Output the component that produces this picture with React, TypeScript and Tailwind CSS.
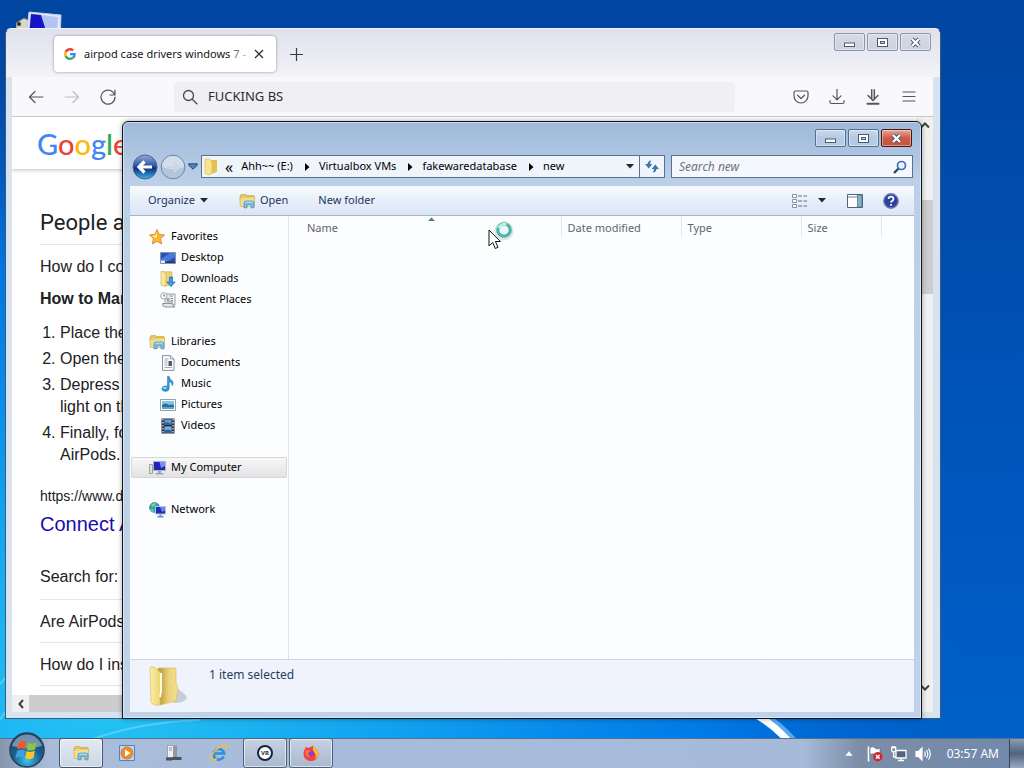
import type { ReactNode } from "react";

const uiFont = "font-['Noto_Sans','Open_Sans',sans-serif]";
const webFont = "font-['Liberation_Sans',Arial,sans-serif]";

/* ---------- icons ---------- */

function LibraryIcon({ className }: { className: string }) {
  return (
    <svg viewBox="0 0 17 16" className={className}>
      <path d="M1 3.5 2 1.5h5l1 1h7v3H1z" fill="#e8c75c" stroke="#c9a33c" strokeWidth=".6" />
      <path d="M2 3.5h13v9H2z" fill="#f7efb4" stroke="#d0b352" strokeWidth=".6" />
      <path d="M.8 5h4.5l1-1h9.4l-.6 9.5H1.4z" fill="#f3e08f" stroke="#cda944" strokeWidth=".6" />
      <path d="M5 14.8V10q0-2 2-2h6q2 0 2 2v4.8h-3v-3.4H8v3.4z" fill="#7cc0e8" stroke="#3d86bd" strokeWidth=".7" />
      <path d="M6 9.6q.2-.8 1.2-.8h5.6q1 0 1.2.8z" fill="#d6f0fc" />
    </svg>
  );
}

function FolderIcon({ className }: { className: string }) {
  return (
    <svg viewBox="0 0 40 42" className={className}>
      <defs>
        <linearGradient id="folderFront" x1="0" x2="1">
          <stop offset="0" stopColor="#fbf0a8" />
          <stop offset="1" stopColor="#ecd274" />
        </linearGradient>
        <linearGradient id="folderBack" x1="0" x2="1">
          <stop offset="0" stopColor="#b8942f" />
          <stop offset=".55" stopColor="#ecd47e" />
          <stop offset="1" stopColor="#f4e08c" />
        </linearGradient>
      </defs>
      <path d="M24 38 29 24q9 6 9 9-2 5-14 5" fill="#8e93a8" opacity=".4" />
      <path d="M9 3h18v15l2 5-2 13-16 4z" fill="url(#folderBack)" stroke="#d9bb58" strokeWidth=".6" />
      <path d="M1 2h4l7 6v19l-1 6v7q-7 1-9-3z" fill="url(#folderFront)" stroke="#d6b751" strokeWidth=".6" />
      <path d="M12 8v19l-1 5" fill="none" stroke="#fffdf0" strokeWidth="1.800" />
    </svg>
  );
}

function StarIcon() {
  return (
    <svg viewBox="0 0 16 16" className="size-4">
      <path d="m8 .5 2.200 4.900 5.300.6-4 3.600 1.200 5.400L8 12.300l-4.700 2.700 1.200-5.400L.5 6l5.300-.6z" fill="#fbb829" stroke="#d9772a" strokeWidth=".8" />
      <path d="M8 2.500 6.500 6.200 3 6.700l3.300 2.600L8 8z" fill="#ffe88a" />
    </svg>
  );
}

function DesktopIcon() {
  return (
    <svg viewBox="0 0 16 16" className="size-4">
      <path d="M.5 2.500h15v11H.5z" fill="#2b4fc0" stroke="#8794a8" />
      <path d="M1 9 10 3h5v4L6 12H1z" fill="#5a8be6" opacity=".7" />
      <path d="M1 11.500h14V13H1z" fill="#273a66" />
      <path d="M1 10.500h4V13H1z" fill="#dfe8f6" />
    </svg>
  );
}

function DownloadsIcon() {
  return (
    <svg viewBox="0 0 16 16" className="size-4">
      <path d="M4 .8h8v13l-7 1z" fill="#ebd27a" stroke="#c9a94a" strokeWidth=".6" />
      <path d="M1 .5h2.500L6 3v10l-1 2.500L1 14z" fill="#f7e79a" stroke="#c9a94a" strokeWidth=".6" />
      <path d="M9.500 6h3v5h2.700L11 15.600 6.800 11h2.700z" fill="#3f9be6" stroke="#1f62a8" strokeWidth=".7" />
    </svg>
  );
}

function RecentIcon() {
  return (
    <svg viewBox="0 0 16 16" className="size-4">
      <path d="M5 2h10v11H5z" fill="#f1f2f5" stroke="#83878f" strokeWidth=".8" />
      <path d="M2.500 11.500h10q0 3 2.500 3.500H5q-2.500 0-2.500-3.500z" fill="#e1e4e8" stroke="#7b8088" strokeWidth=".8" />
      <path d="M7 6.500h2v2H7zM9 4h4M10.500 6.500H13M10.500 8.500H13M7 10h6" fill="none" stroke="#6f757e" strokeWidth=".8" />
      <circle cx="3.800" cy="3.800" r="3.200" fill="#fff" stroke="#8a8f98" strokeWidth=".8" />
      <path d="M3.800 2v2h1.500" fill="none" stroke="#444" strokeWidth=".7" />
    </svg>
  );
}

function DocumentIcon() {
  return (
    <svg viewBox="0 0 16 16" className="size-4">
      <path d="M2.500.6h8L14 4v11.400H2.500z" fill="#fdfdfe" stroke="#7f858e" strokeWidth=".9" />
      <path d="M10.500.6V4H14" fill="#dde2ea" stroke="#7f858e" strokeWidth=".7" />
      <path d="M4.500 4h4M4.500 6h3M4.500 8h3M4.500 10h3M4.500 12.500H12" stroke="#8b93a3" strokeWidth=".8" />
      <path d="M8.500 6H12v5H8.500z" fill="#4f5a6e" />
    </svg>
  );
}

function MusicIcon() {
  return (
    <svg viewBox="0 0 16 16" className="size-4">
      <path d="M7.500.5h1.700q.3 2.500 2.700 4 2.400 1.900.3 5.300.3-3.300-3-4.300v6.700q-.1 3-3.700 3.200-3.800-.1-3.600-2.800.5-2.600 3.600-2.700 1.200 0 2 .4z" fill="#2e9bd6" stroke="#1c6fae" strokeWidth=".5" />
      <ellipse cx="4.800" cy="12" rx="1.800" ry="1.100" fill="#9bdcf5" />
    </svg>
  );
}

function PictureIcon() {
  return (
    <svg viewBox="0 0 16 16" className="size-4">
      <path d="M.5 2.500h15v11H.5z" fill="#fbfcfd" stroke="#8c95a0" strokeWidth=".9" />
      <path d="M2 4h12v4H2z" fill="#7fc6ee" />
      <path d="M2 8q4-3 7 0 3-1 5 0v4H2z" fill="#2b6f8f" />
      <path d="M2 10h12v2H2z" fill="#52a9cf" />
    </svg>
  );
}

function VideoIcon() {
  return (
    <svg viewBox="0 0 16 16" className="size-4">
      <path d="M1.500.5h13v15h-13z" fill="#26303f" />
      <path d="M4.500 1.500h7V7h-7z" fill="#5ba1d8" />
      <path d="M4.500 8.500h7v6h-7z" fill="#6fb7ea" />
      <path d="M4.500 5q3-2 7 1v1h-7zM4.500 12.500q4-2 7 .5v1.500h-7z" fill="#37609b" />
      <path d="M3 1v14M13 1v14" stroke="#e6ebf2" strokeWidth="1.200" strokeDasharray="1.500 1.500" />
    </svg>
  );
}

function ComputerIcon() {
  return (
    <svg viewBox="0 0 17 16" className="h-4 w-[17px]">
      <path d="M.5 4.500h3v9h-3z" fill="#dfe2d2" stroke="#8d927f" strokeWidth=".8" />
      <path d="M4.500 1.500h12v9h-12z" fill="#2024b4" stroke="#a8b3cc" />
      <path d="M10.500 2H16v4l-4 2z" fill="#7b90f0" />
      <path d="M9 11h3v2H9zM6.500 13h8v1.500h-8z" fill="#9aa3b5" />
    </svg>
  );
}

function NetworkIcon() {
  return (
    <svg viewBox="0 0 17 16" className="h-4 w-[17px]">
      <circle cx="5.500" cy="5.500" r="5" fill="#2c9ec7" stroke="#1c6d98" strokeWidth=".5" />
      <path d="M2 2.500q3-2 5-1.500L6 4 3 5zM1 7h3l1 3q-3-.5-4-3" fill="#7ed37e" />
      <path d="M6.500 4.500h10V12h-10z" fill="#1d2cc0" stroke="#b9c4dc" />
      <path d="M11 5h5v3.500L13 10z" fill="#6f83ee" />
      <path d="M10.500 12.500h2V14h2v1.500h-6V14h2z" fill="#7e88a4" />
    </svg>
  );
}

function GoogleG() {
  return (
    <svg viewBox="0 0 48 48" className="size-3 shrink-0">
      <path fill="#ea4335" d="M24 9.500c3.500 0 6.700 1.200 9.200 3.600l6.900-6.900C35.900 2.400 30.500 0 24 0 14.600 0 6.500 5.400 2.600 13.200l8 6.200C12.400 13.700 17.700 9.500 24 9.500z" />
      <path fill="#4285f4" d="M47 24.600c0-1.600-.2-3.100-.4-4.600H24v9h12.900c-.6 3-2.300 5.500-4.800 7.200l7.700 6c4.500-4.200 7.200-10.400 7.200-17.600z" />
      <path fill="#fbbc05" d="M10.500 28.600c-.5-1.500-.8-3-.8-4.600s.3-3.100.8-4.600l-8-6.200C.9 16.500 0 20.100 0 24s.9 7.500 2.600 10.800z" />
      <path fill="#34a853" d="M24 48c6.500 0 11.900-2.100 15.900-5.800l-7.700-6c-2.200 1.500-4.900 2.300-8.200 2.300-6.300 0-11.600-4.200-13.500-9.900l-8 6.200C6.500 42.600 14.600 48 24 48z" />
    </svg>
  );
}

function Triangle() {
  return (
    <svg viewBox="0 0 8 5" className="h-[5px] w-2">
      <path d="M0 0h8L4 4.500z" fill="#1d2939" />
    </svg>
  );
}

/* ---------- window chrome ---------- */

function CaptionButton({ kind, active }: { kind: "min" | "max" | "close"; active?: boolean }) {
  const look =
    kind === "close" && active
      ? "border-[#4a1510] bg-linear-to-b from-[#e3a89c] via-[#cf5a45] to-[#c8523c]"
      : active
        ? "border-[#54708f] bg-linear-to-b from-[#c9daee] via-[#b3c9e4] to-[#b5cce8]"
        : "border-[#8a96a8] bg-linear-to-b from-[#d5dbe6] to-[#cad3e0]";
  return (
    <button aria-label={kind} className={`flex h-[18px] w-[31px] items-center justify-center rounded-[2px] border ring-1 ring-white/40 ring-inset ${look}`}>
      <svg viewBox="0 0 13 11" className="h-[11px] w-[13px]">
        {kind === "min" && <rect x="1.500" y="6" width="10" height="3.500" fill="#fff" stroke="#4c5a6e" />}
        {kind === "max" && (
          <>
            <rect x="1.500" y="1.500" width="10" height="8" fill="#fff" stroke="#4c5a6e" />
            <rect x="4.500" y="4.500" width="4" height="2" fill="#c3d4e8" stroke="#4c5a6e" />
          </>
        )}
        {kind === "close" && (
          <>
            <path d="m3 2 7 7M10 2 3 9" stroke="#4c5a6e" strokeWidth="4" />
            <path d="m3 2 7 7M10 2 3 9" stroke="#fff" strokeWidth="2.200" />
          </>
        )}
      </svg>
    </button>
  );
}

function CaptionButtons({ active }: { active?: boolean }) {
  return (
    <div className="flex gap-[2px]">
      <CaptionButton kind="min" active={active} />
      <CaptionButton kind="max" active={active} />
      <CaptionButton kind="close" active={active} />
    </div>
  );
}

/* ---------- browser ---------- */

function ToolButton({ label, children }: { label: string; children: ReactNode }) {
  return (
    <button aria-label={label} className="flex h-8 w-9 items-center justify-center">
      <svg viewBox="0 0 16 16" className="size-4" fill="none" stroke="#55555c" strokeWidth="1.200" strokeLinecap="round" strokeLinejoin="round">
        {children}
      </svg>
    </button>
  );
}

function BrowserWindow() {
  return (
    <section className={`absolute top-[28px] right-[83px] bottom-[19px] left-[5px] flex flex-col rounded-t-md border border-[#3d5878] border-t-[#eef2fa] bg-[#d8e3f1] pr-[7px] pb-[6px] pl-[6px] ${uiFont}`}>
      <header className="-mr-[7px] -ml-[6px] flex h-12 items-start rounded-t-md bg-linear-to-b from-[#dfe1ec] to-[#f3f3f8] pr-[9px] pl-[48px]">
        <div className="mt-[7px] flex h-9 w-[222px] items-center rounded bg-white pr-3 pl-[10px] shadow-[0_0_3px_rgba(0,0,0,0.4)]">
          <GoogleG />
          <span className="ml-2 flex-1 text-[11px] whitespace-nowrap text-[#15141a]">
            airpod case drivers windows <span className="text-[#77777d]">7</span> <span className="text-[#b0b0b5]">-</span>
          </span>
          <button aria-label="Close tab">
            <svg viewBox="0 0 10 10" className="size-[10px]" stroke="#2b2a33" strokeWidth="1.200">
              <path d="m1 1 8 8M9 1 1 9" />
            </svg>
          </button>
        </div>
        <button aria-label="New tab" className="mt-[19px] ml-[14px]">
          <svg viewBox="0 0 13 13" className="size-[13px]" stroke="#3b3b42" strokeWidth="1.200">
            <path d="M6.500 0v13M0 6.500h13" />
          </svg>
        </button>
        <div className="mt-1 ml-auto">
          <CaptionButtons />
        </div>
      </header>

      <nav className="flex h-10 items-center border-b border-[#c9c9ce] bg-[#f9f9fb] px-[6px]">
        <ToolButton label="Back">
          <path d="M15 8H1.500M7 2.500 1.500 8 7 13.500" />
        </ToolButton>
        <ToolButton label="Forward">
          <path d="M1 8h13.500M9 2.500 14.500 8 9 13.500" stroke="#bdbdc2" />
        </ToolButton>
        <ToolButton label="Reload">
          <path d="M14.500 5.500A7 7 0 1 0 15 8M15 1v5h-5" />
        </ToolButton>
        <label className="ml-12 flex h-[30px] flex-1 items-center rounded bg-[#f0eff3] pl-2">
          <svg viewBox="0 0 16 16" className="size-4" fill="none" stroke="#4a4a52" strokeWidth="1.300">
            <circle cx="6.500" cy="6.500" r="5" />
            <path d="m10.300 10.300 5 5" />
          </svg>
          <input aria-label="Address" defaultValue="FUCKING BS" className="ml-[10px] min-w-0 flex-1 bg-transparent text-[13px] text-[#2b2a33] outline-none" />
        </label>
        <div className="ml-12 flex">
          <ToolButton label="Pocket">
            <path d="M2.500 2h11q1.500 0 1.500 1.500V7A7 7 0 0 1 1 7V3.500Q1 2 2.500 2zM4.500 6.200 8 9.500l3.500-3.300" />
          </ToolButton>
          <ToolButton label="Downloads">
            <path d="M8 0v10.500M4 6.800l4 4 4-4M1 11.500V13q0 1.500 1.500 1.500h11q1.500 0 1.500-1.500v-1.500" />
          </ToolButton>
          <ToolButton label="Download helper">
            <path d="M6.700.8v9M9.300.8v9M3 6.500l5 5 5-5" strokeWidth="1.500" />
            <path d="M2.500 14.800h11" strokeWidth="2" />
          </ToolButton>
          <ToolButton label="Menu">
            <path d="M2 3h12M2 7.500h12M2 12h12" />
          </ToolButton>
        </div>
      </nav>

      <div className="flex min-h-0 flex-1">
        <div className="flex min-w-0 flex-1 flex-col bg-white">
          <SearchPage />
          <div className="flex h-[17px] bg-[#cdcdcd]">
            <button aria-label="Scroll left" className="flex w-[17px] items-center justify-center bg-[#f0f0f0]">
              <svg viewBox="0 0 6 10" className="h-[10px] w-[6px]" fill="none" stroke="#404040" strokeWidth="2">
                <path d="M5 1 1.500 5 5 9" />
              </svg>
            </button>
          </div>
        </div>
        <div className="flex w-[17px] flex-col items-center bg-[#f0f0f0] pt-1 pb-5">
          <svg viewBox="0 0 10 8" className="h-2 w-[10px]" fill="none" stroke="#404040" strokeWidth="2">
            <path d="M1 6.500 5 2.500l4 4" />
          </svg>
          <div className="mt-[71px] h-[94px] w-full bg-[#cdcdcd]" />
          <svg viewBox="0 0 10 8" className="mt-auto h-2 w-[10px]" fill="none" stroke="#404040" strokeWidth="2">
            <path d="M1 1.500 5 5.500l4-4" />
          </svg>
        </div>
      </div>
    </section>
  );
}

function SearchPage() {
  return (
    <main className={`min-h-0 flex-1 overflow-hidden text-base leading-[22px] text-[#202124] ${webFont}`}>
      <div className="flex h-[52px] items-center pt-[2px] pl-[25px] font-['Lato',sans-serif] text-[29px] font-medium shadow-[0_1px_4px_rgba(0,0,0,0.25)]">
        <a href="#home" aria-label="Google home">
          <span className="text-[#4285f4]">G</span>
          <span className="text-[#ea4335]">o</span>
          <span className="text-[#fbbc05]">o</span>
          <span className="text-[#4285f4]">g</span>
          <span className="text-[#34a853]">l</span>
          <span className="text-[#ea4335]">e</span>
        </a>
      </div>
      <div className="pl-7">
        <h2 className="mt-10 border-b border-[#e4e6ea] pb-[7px] font-['Roboto',sans-serif] text-[22px] leading-7">People a</h2>
        <p className="mt-[11px]">How do I co</p>
        <p className="mt-[10px] font-bold">How to Mar</p>
        <ol className="mt-3 flex list-decimal flex-col gap-1 pl-5">
          <li>Place the</li>
          <li>Open the</li>
          <li>
            Depress
            <br />
            light on th
          </li>
          <li>
            Finally, fo
            <br />
            AirPods.
          </li>
        </ol>
        <p className="mt-5 text-sm leading-5">https://www.d</p>
        <a href="#result" className="mt-1 block text-xl leading-7 text-[#1a0dab]">
          Connect A
        </a>
        <p className="mt-7 border-b border-[#e4e6ea] pb-[11px]">Search for:</p>
        <p className="border-b border-[#e4e6ea] pt-[11px] pb-[9px]">Are AirPods</p>
        <p className="border-b border-[#e4e6ea] pt-[11px] pb-[9px]">How do I ins</p>
      </div>
    </main>
  );
}

/* ---------- explorer ---------- */

const sidebar = [
  { name: "Favorites", icon: <StarIcon />, children: [
    { name: "Desktop", icon: <DesktopIcon /> },
    { name: "Downloads", icon: <DownloadsIcon /> },
    { name: "Recent Places", icon: <RecentIcon /> },
  ] },
  { name: "Libraries", icon: <LibraryIcon className="h-4 w-[17px]" />, children: [
    { name: "Documents", icon: <DocumentIcon /> },
    { name: "Music", icon: <MusicIcon /> },
    { name: "Pictures", icon: <PictureIcon /> },
    { name: "Videos", icon: <VideoIcon /> },
  ] },
  { name: "My Computer", icon: <ComputerIcon />, selected: true, children: [] },
  { name: "Network", icon: <NetworkIcon />, children: [] },
];

const crumbs = ["Ahh~~ (E:)", "Virtualbox VMs", "fakewaredatabase", "new"];

function Sidebar() {
  return (
    <aside className="flex w-[159px] shrink-0 flex-col gap-[21px] border-r border-[#d9e3f1] px-[1px] pt-[10px] text-[11px] text-black">
      {sidebar.map((group) => (
        <div key={group.name}>
          <button
            className={`flex h-[21px] w-full items-center gap-1 rounded-[2px] pl-[18px] ${
              group.selected ? "bg-linear-to-b from-[#f8f8f9] to-[#e2e2e4] ring-1 ring-[#d6d6d9] ring-inset" : ""
            }`}
          >
            <span className="w-[18px]">{group.icon}</span>
            {group.name}
          </button>
          {group.children.map((item) => (
            <button key={item.name} className="flex h-[21px] w-full items-center gap-[5px] pl-[29px] whitespace-nowrap">
              {item.icon}
              {item.name}
            </button>
          ))}
        </div>
      ))}
    </aside>
  );
}

function AddressRow() {
  return (
    <div className="flex h-[39px] items-center pr-[1px] pl-[2px] text-xs text-black">
      <button aria-label="Back">
        <svg viewBox="0 0 26 26" className="size-[26px]">
          <defs>
            <linearGradient id="backFill" x1="0" y1="0" x2="0" y2="1">
              <stop offset="0" stopColor="#93abd6" />
              <stop offset=".45" stopColor="#2f56a6" />
              <stop offset=".55" stopColor="#0c2f80" />
              <stop offset="1" stopColor="#3fb2ee" />
            </linearGradient>
          </defs>
          <circle cx="13" cy="13" r="12" fill="url(#backFill)" stroke="#4c6487" />
          <path d="M20 13H8M12.500 7.500 7 13l5.500 5.500" fill="none" stroke="#fff" strokeWidth="3.200" />
        </svg>
      </button>
      <button aria-label="Forward" className="ml-[2px]">
        <svg viewBox="0 0 26 26" className="size-[26px]">
          <circle cx="13" cy="13" r="11.800" fill="#b4c6dc" stroke="#6e84a2" />
          <path d="M2 13a11 11 0 0 1 22 0q-11 4-22 0" fill="#d3deec" />
          <path d="M7 13h11M14 8.500l4.500 4.500-4.500 4.500" fill="none" stroke="#c9d6e6" strokeWidth="2.500" />
        </svg>
      </button>
      <button aria-label="Recent pages" className="ml-[2px]">
        <svg viewBox="0 0 10 7" className="h-[7px] w-[10px]">
          <path d="M.8.800h8.400v1.500L5 6.200.8 2.300z" fill="#4e86b8" stroke="#2a4668" />
        </svg>
      </button>

      <div className="ml-[3px] flex h-[23px] min-w-0 flex-1 border border-[#5b718f] bg-[#f0f5fc] text-[11px]">
        <div className="flex min-w-0 flex-1 items-center whitespace-nowrap">
          <svg viewBox="0 0 16 18" className="ml-[2px] h-[18px] w-4">
            <path d="M7 2h6v12l-6 2z" fill="#e3c253" />
            <path d="M1 1h4l3 2.500V14l-2 3-5-1.500z" fill="#f7e58c" stroke="#d9b94d" strokeWidth=".6" />
          </svg>
          <span className="mr-2 ml-[5px] text-base leading-4">«</span>
          {crumbs.map((crumb, i) => (
            <span key={crumb} className="flex items-center">
              {i > 0 && (
                <svg viewBox="0 0 5 8" className="mr-[9px] ml-3 h-2 w-[5px]">
                  <path d="m0 0 4.500 4L0 8z" />
                </svg>
              )}
              {crumb}
            </span>
          ))}
          <span className="mr-[5px] ml-auto">
            <Triangle />
          </span>
        </div>
        <button aria-label="Refresh" className="flex w-[25px] items-center justify-center border-l border-[#5b718f]">
          <svg viewBox="0 0 14 13" className="h-[13px] w-[14px]">
            <path d="M6.500.500Q3 .5 2.500 4H0l3.700 4.500L7.300 4H5q0-2 1.500-3.500z" fill="#3279ae" />
            <path d="M7.500 12.500Q11 12.500 11.500 9H14l-3.700-4.500L6.700 9H9q0 2-1.500 3.500z" fill="#3279ae" />
          </svg>
        </button>
      </div>

      <label className="ml-[6px] flex h-[23px] w-[242px] items-center border border-[#5b718f] bg-[#f4f8fd] pr-[5px] pl-[7px]">
        <input aria-label="Search new" placeholder="Search new" className="min-w-0 flex-1 bg-transparent italic outline-none placeholder:text-[#6d7480]" />
        <svg viewBox="0 0 14 14" className="size-[14px]" fill="none">
          <path d="M1 13 5.500 8.500" stroke="#2c4674" strokeWidth="2.400" />
          <circle cx="8.500" cy="5.500" r="4" fill="#eef6fd" stroke="#426fb0" strokeWidth="1.700" />
        </svg>
      </label>
    </div>
  );
}

function ExplorerWindow() {
  return (
    <section className={`absolute top-[121px] right-[102px] bottom-[19px] left-[122px] flex flex-col rounded-t-md border border-[#10161f] bg-linear-to-b from-[#9db9da] via-[#bccfe8] via-10% to-[#bfd2ea] px-[7px] pb-[6px] shadow-[inset_0_0_0_1px_rgba(255,255,255,0.45),0_0_5px_rgba(0,0,0,0.35)] ${uiFont}`}>
      <header className="flex h-[25px] items-end justify-end pr-[2px]">
        <CaptionButtons active />
      </header>
      <AddressRow />

      <div className="flex h-[30px] items-center border-b border-[#a3b4cb] bg-linear-to-b from-[#f8fbfe] via-[#e6effa] to-[#dbe5f3] pr-[15px] pl-[18px] text-[11px] text-[#1e3457]">
        <button className="flex items-center gap-[5px]">
          Organize <Triangle />
        </button>
        <button className="ml-[31px] flex items-center gap-1">
          <LibraryIcon className="h-4 w-[17px]" />
          Open
        </button>
        <button className="ml-[30px]">New folder</button>
        <button aria-label="Change view" className="ml-auto flex items-center gap-[10px]">
          <svg viewBox="0 0 16 14" className="h-[14px] w-4" fill="none">
            <path d="M.5.500h4v3h-4zM.5 5.500h4v3h-4zM.5 10.500h4v3h-4z" fill="#fff" stroke="#6a7a94" strokeWidth=".8" />
            <path d="M6 2h4M11.500 2H15M6 7h4M11.500 7H15M6 12h4M11.500 12H15" stroke="#5f6e88" />
          </svg>
          <Triangle />
        </button>
        <button aria-label="Preview pane" className="ml-[21px]">
          <svg viewBox="0 0 16 14" className="h-[14px] w-4">
            <path d="M.5.500h15v13H.5z" fill="#fdfefe" stroke="#4d6480" />
            <path d="M10.500 1H15v12h-4.500z" fill="#7fb5c8" stroke="#4d6480" strokeWidth=".7" />
            <path d="M1 3h9" stroke="#4d6480" strokeWidth=".8" />
          </svg>
        </button>
        <button aria-label="Help" className="ml-5">
          <svg viewBox="0 0 16 16" className="size-4">
            <circle cx="8" cy="8" r="7.200" fill="#2a3fa8" stroke="#6f7ba0" strokeWidth="1.400" />
            <path d="M5.500 6q.2-2.300 2.500-2.300T10.500 6q0 1.200-1.300 1.900Q8 8.500 8 9.600M8 11v1.700" fill="none" stroke="#fff" strokeWidth="1.800" />
          </svg>
        </button>
      </div>

      <div className="flex min-h-0 flex-1 bg-[#fcfdfe]">
        <Sidebar />
        <div className="min-w-0 flex-1">
          <table className="w-[592px] table-fixed text-left text-[11px] text-[#5c6673]">
            <thead>
              <tr className="h-[20px]">
                <th className="w-[272px] border-r border-[#e3e8ef] pt-1 pl-[18px] font-normal">Name</th>
                <th className="w-[120px] border-r border-[#e3e8ef] pt-1 pl-[6px] font-normal">Date modified</th>
                <th className="w-[120px] border-r border-[#e3e8ef] pt-1 pl-[6px] font-normal">Type</th>
                <th className="w-[80px] border-r border-[#e3e8ef] pt-1 pl-[6px] font-normal">Size</th>
              </tr>
            </thead>
          </table>
        </div>
      </div>

      <footer className="flex h-[53px] items-start border-t border-[#ccd5e2] bg-linear-to-b from-[#f0f3fb] to-[#eff3fd] pl-[19px] text-xs text-[#26405c]">
        <FolderIcon className="mt-[5px] h-[42px] w-10" />
        <p className="mt-[7px] ml-5">1 item selected</p>
      </footer>

      {/* sort marker over the Name header */}
      <svg viewBox="0 0 7 4" className="absolute top-[95px] left-[305px] h-1 w-[7px]">
        <path d="M0 4 3.500.500 7 4z" fill="#4a7a94" />
      </svg>
    </section>
  );
}

/* ---------- desktop ---------- */

function Wallpaper() {
  return (
    <svg viewBox="0 0 1024 738" preserveAspectRatio="none" className="absolute inset-0 h-full w-full">
      <defs>
        <linearGradient id="sky" x1="0" y1="0" x2="0" y2="1">
          <stop offset="0" stopColor="#0045a0" />
          <stop offset=".35" stopColor="#004eb0" />
          <stop offset="1" stopColor="#0060ca" />
        </linearGradient>
        <radialGradient id="glow" cx="0.1" cy="0.95" r="0.85">
          <stop offset="0" stopColor="#25c4f4" />
          <stop offset=".35" stopColor="#10a0f0" />
          <stop offset=".7" stopColor="#0080ee" stopOpacity=".8" />
          <stop offset="1" stopColor="#0060ca" stopOpacity="0" />
        </radialGradient>
      </defs>
      <path d="M0 0h1024v738H0z" fill="url(#sky)" />
      <path d="M0 0h1024v738H0z" fill="url(#glow)" />
      <path d="M748 708q26 14 44 34" fill="none" stroke="#8fd4ff" strokeWidth="11" opacity=".6" />
      <path d="M748 710q24 12 42 33" fill="none" stroke="#fff" strokeWidth="7" />
      <path d="M90 740q50-18 110-20M0 684l5-6M0 720l5-8" fill="none" stroke="#9be8ff" strokeWidth="2" opacity=".4" />
    </svg>
  );
}

function DesktopComputer() {
  return (
    <svg viewBox="0 0 46 36" className="absolute top-[11px] left-[16px] h-9 w-[46px]">
      <path d="M0 12 8 7l6 3v18H0z" fill="#d9d8c4" stroke="#6d6d5a" />
      <circle cx="3" cy="13" r="2" fill="#333" />
      <path d="m13 1 32 3-1 26-34-3z" fill="#dfe8f8" stroke="#c2cde2" />
      <path d="m15 3 27 3-1 21-28-2z" fill="#b4c4f2" />
      <path d="m15 3 10 1 7 22-19-2z" fill="#1414c8" />
    </svg>
  );
}

function Cursor() {
  return (
    <svg viewBox="0 0 28 30" className="absolute top-[220px] left-[487px] h-[30px] w-7">
      <circle cx="17" cy="11" r="7" fill="none" stroke="#b9cfd0" strokeWidth="5" opacity=".5" />
      <circle cx="17" cy="10" r="6.200" fill="#f2fdfc" stroke="#4fb3a8" strokeWidth="3.200" />
      <circle cx="17" cy="10" r="4" fill="#e9f4fb" />
      <path d="M11.500 8a6 6 0 0 1 8-3.500" fill="none" stroke="#b4f0e6" strokeWidth="2.500" />
      <path d="M2 10v16l3.700-3.500 2.600 6 2.700-1.200-2.600-5.800h5z" fill="#fff" stroke="#111" />
    </svg>
  );
}

/* ---------- taskbar ---------- */

function TaskButton({ label, open, active, children }: { label: string; open?: boolean; active?: boolean; children: ReactNode }) {
  const look = active
    ? "border-[#44566f] bg-linear-to-b from-[#e3e9f2] to-[#ccd6e4]"
    : open
      ? "border-[#4f6079] bg-linear-to-b from-[#c6d1e2] to-[#a9b9d0]"
      : "border-transparent";
  return (
    <button aria-label={label} className={`flex h-[30px] w-11 items-center justify-center rounded-[3px] border ${open ? "ring-1 ring-white/60 ring-inset" : ""} ${look}`}>
      {children}
    </button>
  );
}

function StartOrb() {
  return (
    <svg viewBox="0 0 36 36" className="size-9">
      <defs>
        <radialGradient id="orb" cx=".5" cy=".8" r=".8">
          <stop offset="0" stopColor="#3fc4e8" />
          <stop offset=".5" stopColor="#1c5f8f" />
          <stop offset="1" stopColor="#1d3f63" />
        </radialGradient>
      </defs>
      <circle cx="18" cy="18" r="17" fill="url(#orb)" stroke="#27425f" strokeWidth="1.500" />
      <path d="M3 14a15.500 15.500 0 0 1 30 0q-15 4-30 0" fill="#c7d8e6" opacity=".5" />
      <path d="M9.500 10.500q4-2.500 8-.5l-1.200 7q-4-1.800-8 .4z" fill="#ee5a29" />
      <path d="M19 10.700q4 2 8.500-.3l-1.400 7q-4.400 2.200-8.300.2z" fill="#8cc63f" />
      <path d="M8 18.900q4-2.200 8-.4l-1.300 7q-4-1.900-8.200.5z" fill="#3f9fe0" />
      <path d="M17.500 19q4 2 8.300-.2l-1.400 7.200q-4.400 2.200-8.200.1z" fill="#fcc62c" />
    </svg>
  );
}

function Taskbar() {
  return (
    <footer className={`relative flex h-[30px] shrink-0 items-end border-t border-[#56708f] bg-linear-to-r from-[#8596ae] via-[#a9bddb] via-5% to-[#a3bad8] text-white ${uiFont}`}>
      <div className="absolute inset-y-0 right-0 w-[220px] bg-linear-to-r from-transparent via-[#7c8da6] via-25% to-[#7189ac]" />
      <button aria-label="Start" className="relative ml-[9px]">
        <StartOrb />
      </button>
      <div className="relative ml-[14px] flex gap-[2px]">
        <TaskButton label="Windows Explorer" open active>
          <LibraryIcon className="h-4 w-[17px]" />
        </TaskButton>
        <TaskButton label="Media Player">
          <svg viewBox="0 0 16 16" className="size-4">
            <path d="M.5.500h15v15H.5z" fill="#bcd6f2" stroke="#4a86c8" />
            <circle cx="8" cy="8" r="6" fill="#f58a1f" stroke="#c9650e" strokeWidth=".6" />
            <path d="m6 4.500 5.500 3.500L6 11.500z" fill="#fff" />
          </svg>
        </TaskButton>
        <TaskButton label="Device manager">
          <svg viewBox="0 0 17 16" className="h-4 w-[17px]">
            <path d="M2.500.5h6v12h-6z" fill="#eceef0" stroke="#9096a0" strokeWidth=".8" />
            <path d="M8.500.5H12v12H8.500z" fill="#8f969f" />
            <path d="M1 12.500h6v3H1zM7 12h9.500v3H7z" fill="#4a525c" />
            <path d="M4 3h3M4 5h3" stroke="#8d949c" />
          </svg>
        </TaskButton>
        <TaskButton label="Internet Explorer">
          <svg viewBox="0 0 18 18" className="size-[18px]" fill="none">
            <path d="M13.800 12.500A5.300 5.300 0 1 1 14.200 9.500H5" stroke="#2d8fdc" strokeWidth="2.600" />
            <path d="M1.500 15.500C-.5 12 6 4.500 11.500 2q4.500-2 5 .3.200 1-.8 2.700" stroke="#f2c230" strokeWidth="1.500" />
            <path d="M1.500 15.500q1.500 1.500 5.500-1" stroke="#f2c230" strokeWidth="1.500" />
          </svg>
        </TaskButton>
        <TaskButton label="VR" open>
          <span className="flex size-4 items-center justify-center rounded-full border-2 border-[#17243c] bg-white text-[6px] leading-none font-bold text-[#17243c]">VR</span>
        </TaskButton>
        <TaskButton label="Firefox" open>
          <svg viewBox="0 0 16 16" className="size-4">
            <path d="M2 4 3 1.800 5 3q2-1.500 4-1.500L10.500.5q.5 2 2.500 3.500 2.700 2 2.500 5.200A7.500 7 0 0 1 .5 9Q.3 6 2 4z" fill="#f5413f" />
            <path d="M10.500.5q.5 2 2.500 3.500 2.700 2 2.500 5.200-.5 3.500-3.500 5.300 2-5-1-7.500-2-2-.5-6.500z" fill="#fdbb2d" />
            <circle cx="8" cy="8.500" r="3" fill="#8a3fd0" />
            <path d="M2.500 6q2-1.500 5.500.3-2.800.2-2.800 2.200 0 2.300 3 2.500-4 1.800-5.700-1.500z" fill="#fd7b2f" />
          </svg>
        </TaskButton>
      </div>

      <div className="relative ml-auto flex h-full items-center">
        <svg viewBox="0 0 8 5" className="h-[5px] w-2">
          <path d="M4 .3 7.700 4.700H.3z" fill="#fff" />
        </svg>
        <svg viewBox="0 0 16 16" className="ml-[14px] size-4">
          <path d="M1.500.5v15" stroke="#fff" strokeWidth="1.600" />
          <path d="M3 1.500q3-1.500 5 .5t5 0v7q-3 1-5-.5T3 8.500z" fill="#fff" stroke="#50607a" strokeWidth=".6" />
          <circle cx="10.800" cy="10.800" r="4.700" fill="#d3262c" />
          <path d="m9 9 3.600 3.600M12.600 9 9 12.600" stroke="#fff" strokeWidth="1.500" />
        </svg>
        <svg viewBox="0 0 16 16" className="ml-2 size-4" fill="none" stroke="#fff" strokeWidth="1.300">
          <path d="M5 4.500h10V12H5zM10 12v2.500M7 14.500h6" fill="#52647f" />
          <path d="M.7 1.500h4v3q-.5 1.500-2 1.500-1.700 0-2-1.500zM2.700 6v5h2M1.700 0v1.500M3.700 0v1.500" />
        </svg>
        <svg viewBox="0 0 16 16" className="ml-2 size-4" fill="none" stroke="#fff" strokeWidth="1.200">
          <path d="M1 5.500h2.500L7 2v12l-3.500-3.500H1z" fill="#fff" />
          <path d="M9.500 5.500q1.500 2.500 0 5M11.500 4q2.500 4 0 8M13.500 2.500q3.500 5.500 0 11" />
        </svg>
        <time className="ml-4 text-xs">03:57 AM</time>
        <button aria-label="Show desktop" className="ml-[10px] h-full w-[15px] border-l border-[#33465f] bg-linear-to-b from-[#8b9bb2] via-[#51637d] to-[#9aabc2]" />
      </div>
    </footer>
  );
}

export default function App() {
  return (
    <div className="flex h-screen flex-col overflow-hidden">
      <div className="relative flex-1">
        <Wallpaper />
        <DesktopComputer />
        <BrowserWindow />
        <ExplorerWindow />
        <Cursor />
      </div>
      <Taskbar />
    </div>
  );
}
